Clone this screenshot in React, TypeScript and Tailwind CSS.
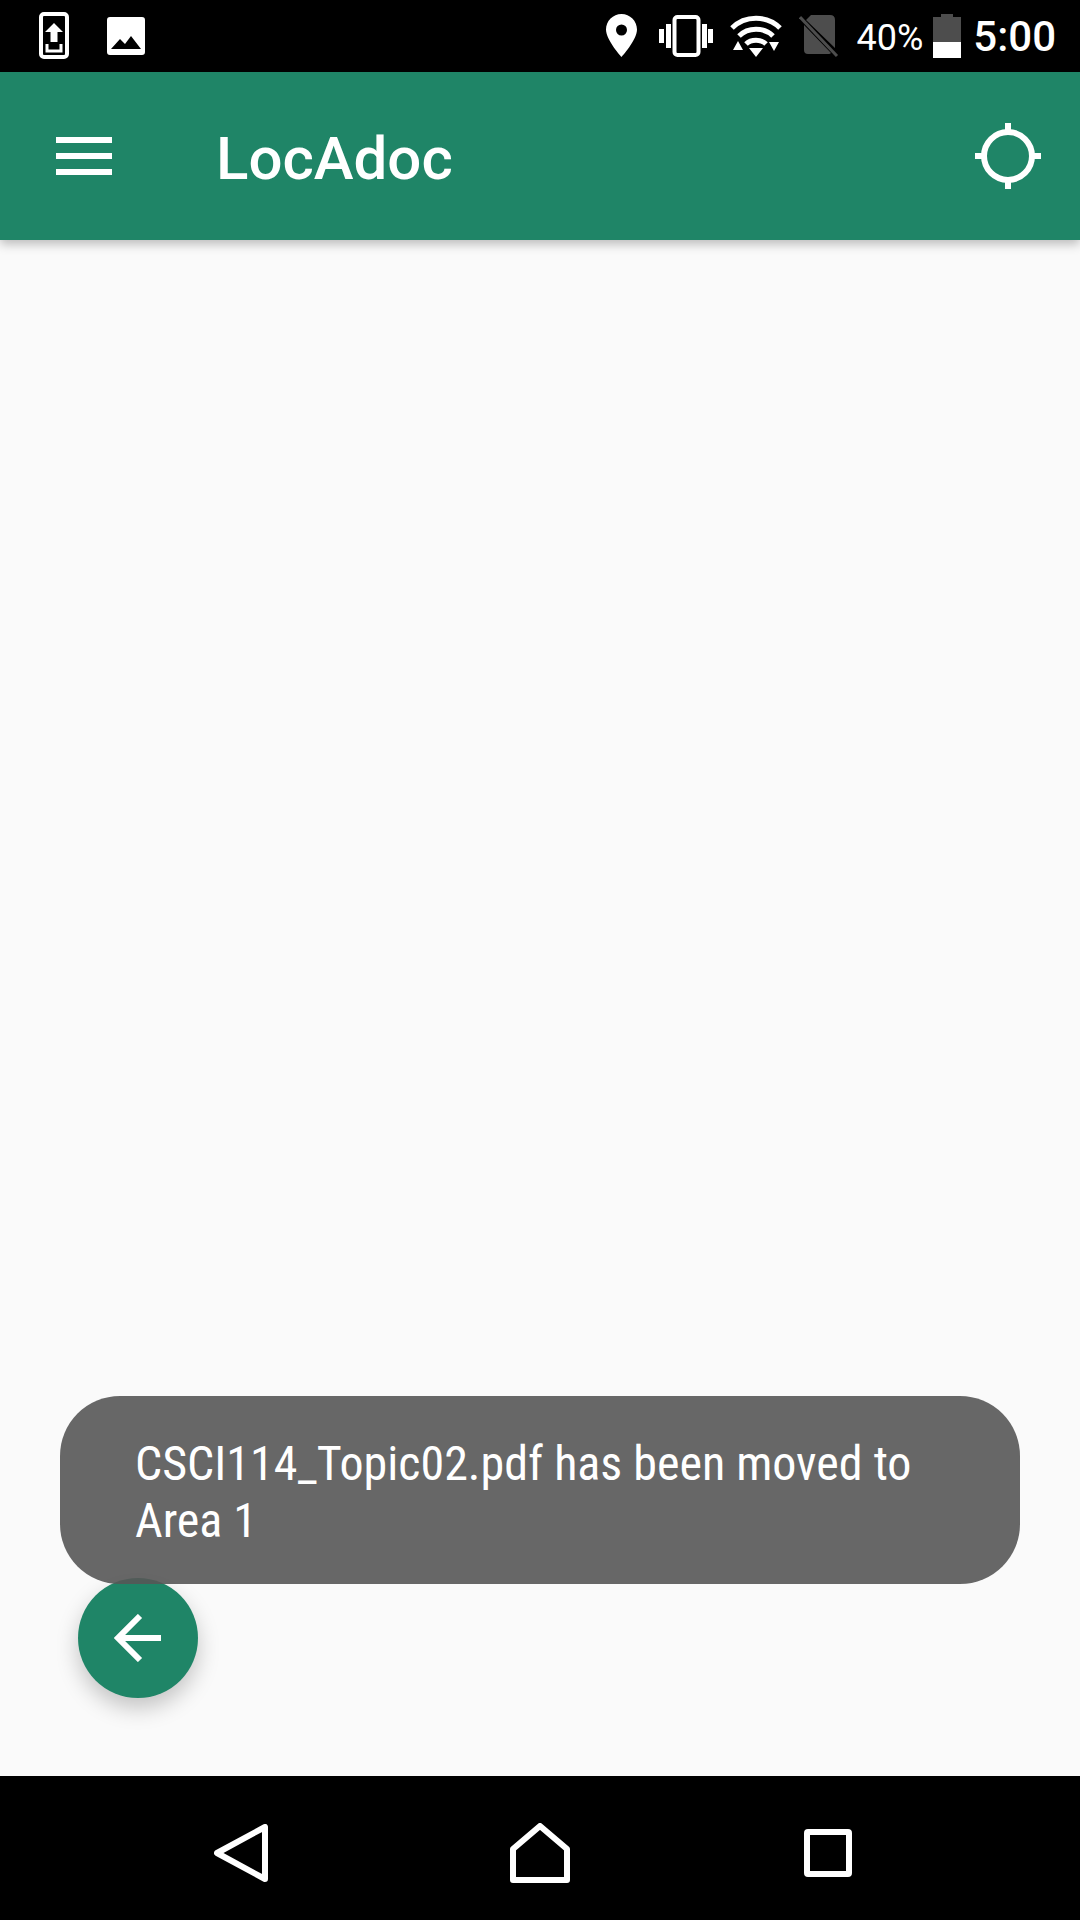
const roboto = { fontFamily: 'Roboto, "Noto Sans", sans-serif' };

function StatusLeft() {
  return (
    <div className="flex items-center">
      <svg width="31" height="48" viewBox="0 0 31 48" className="ml-[39px]">
        <rect x="2" y="2" width="26" height="43" rx="3" fill="none" stroke="#fff" strokeWidth="4" />
        <path d="M15 11 L24 20 H18.500 V30 H11.500 V20 H6 Z" fill="#fff" />
        <path d="M8 32 V39 H22 V32" fill="none" stroke="#fff" strokeWidth="3" />
      </svg>
      <svg width="38" height="38" viewBox="0 0 38 38" className="ml-[37px]">
        <path fillRule="evenodd" fill="#fff" d="M3 0 H35 Q38 0 38 3 V35 Q38 38 35 38 H3 Q0 38 0 35 V3 Q0 0 3 0 Z M4 32 H34 L24 19 L18 27 L13 22 Z" />
      </svg>
    </div>
  );
}

function StatusRight() {
  return (
    <div className="flex items-center">
      <svg width="31" height="44" viewBox="0 0 31 44">
        <path fillRule="evenodd" fill="#fff" d="M15.500 0 C7 0 0 7 0 15.500 C0 26 15.500 43 15.500 43 C15.500 43 31 26 31 15.500 C31 7 24 0 15.500 0 Z M15.500 10.500 A5.500 5.500 0 1 1 15.500 21.500 A5.500 5.500 0 1 1 15.500 10.500 Z" />
      </svg>
      <svg width="54" height="42" viewBox="0 0 54 42" className="ml-[22px]">
        <rect x="15.500" y="2" width="24" height="38" rx="3" fill="none" stroke="#fff" strokeWidth="4" />
        <rect x="0" y="14" width="5" height="14" fill="#fff" />
        <rect x="7" y="9" width="5" height="24" fill="#fff" />
        <rect x="43" y="9" width="5" height="24" fill="#fff" />
        <rect x="49" y="14" width="5" height="14" fill="#fff" />
      </svg>
      <svg width="52" height="44" viewBox="0 0 52 44" className="ml-[17px]">
        <g fill="none" stroke="#fff" strokeWidth="5">
          <path d="M2 14 C15 1 37 1 50 14" />
          <path d="M9 22 C18 13 34 13 43 22" />
          <path d="M16 30 C21 25 31 25 36 30" />
        </g>
        <path d="M26 43 L19 34 H33 Z M8 27 L13 36 H3 Z M39 28 H49 L44 37 Z" fill="#fff" />
      </svg>
      <svg width="40" height="44" viewBox="0 0 40 44" className="ml-[17px]">
        <path d="M12 1 H31 Q36 1 36 6 V34 L7 6 Z M5 11 L32 39 Q31 40 30 40 H9 Q5 40 5 36 Z" fill="#4d4d4d" />
        <path d="M1 3 L38 42" stroke="#4d4d4d" strokeWidth="3" />
      </svg>
      <span className="ml-[17px] pt-[4px] text-[36px] leading-none text-white">40%</span>
      <svg width="28" height="44" viewBox="0 0 28 44" className="ml-[10px]">
        <path d="M8 0 H20 V3 H28 V28 H0 V3 H8 Z" fill="#4d4d4d" />
        <rect x="0" y="28" width="28" height="16" fill="#fff" />
      </svg>
      <span className="mr-[24px] ml-[12px] pt-[2px] text-[42px] leading-none font-medium text-white">5:00</span>
    </div>
  );
}

function Crosshair() {
  return (
    <svg width="66" height="66" viewBox="0 0 66 66">
      <circle cx="33" cy="33" r="24" fill="none" stroke="#fff" strokeWidth="6" />
      <path d="M33 0 V9 M33 57 V66 M0 33 H9 M57 33 H66" stroke="#fff" strokeWidth="6" />
    </svg>
  );
}

export default function App() {
  return (
    <div className="flex h-[1920px] w-[1080px] flex-col overflow-hidden bg-[#fafafa]" style={roboto}>
      <div className="flex h-[72px] shrink-0 items-center justify-between bg-black">
        <StatusLeft />
        <StatusRight />
      </div>

      <header className="z-10 flex h-[168px] shrink-0 items-center bg-[#1f8567] shadow-[0_4px_10px_rgba(0,0,0,0.26)]">
        <div className="ml-[56px] flex w-[56px] flex-col gap-[10px]">
          <div className="h-[6px] bg-white" />
          <div className="h-[6px] bg-white" />
          <div className="h-[6px] bg-white" />
        </div>
        <h1 className="ml-[104px] pt-[5px] text-[60px] leading-none font-medium text-white">LocAdoc</h1>
        <div className="mr-[39px] ml-auto">
          <Crosshair />
        </div>
      </header>

      <main className="flex flex-1 flex-col justify-end">
        <div className="relative z-10 mx-[60px] flex h-[188px] flex-col justify-center rounded-[60px] bg-[#565656]/90 pt-[3px] pl-[75px]">
          <p className="text-[48px] leading-[57px] whitespace-nowrap text-white [font-stretch:75%]">
            CSCI114_Topic02.pdf has been moved to
            <br />
            Area 1
          </p>
        </div>
        <button className="-mt-[6px] mb-[78px] ml-[78px] flex h-[120px] w-[120px] items-center justify-center rounded-full bg-[#1f8567] shadow-[0_10px_22px_rgba(0,0,0,0.22)]">
          <svg width="48" height="48" viewBox="0 0 48 48">
            <path d="M47 24 H4 M26 2 L4 24 L26 46" fill="none" stroke="#fff" strokeWidth="6" />
          </svg>
        </button>
      </main>

      <nav className="flex h-[144px] shrink-0 items-center bg-black pt-[10px]">
        <svg width="54" height="58" viewBox="0 0 54 58" className="ml-[214px]">
          <path d="M51 3 V55 L3 29 Z" fill="none" stroke="#fff" strokeWidth="6" strokeLinejoin="round" />
        </svg>
        <svg width="60" height="60" viewBox="0 0 60 60" className="ml-[242px]">
          <path d="M30 3 L57 26 V57 H3 V26 Z" fill="none" stroke="#fff" strokeWidth="6" strokeLinejoin="round" />
        </svg>
        <svg width="48" height="48" viewBox="0 0 48 48" className="ml-[234px]">
          <rect x="3" y="3" width="42" height="42" rx="1" fill="none" stroke="#fff" strokeWidth="6" strokeLinejoin="round" />
        </svg>
      </nav>
    </div>
  );
}
